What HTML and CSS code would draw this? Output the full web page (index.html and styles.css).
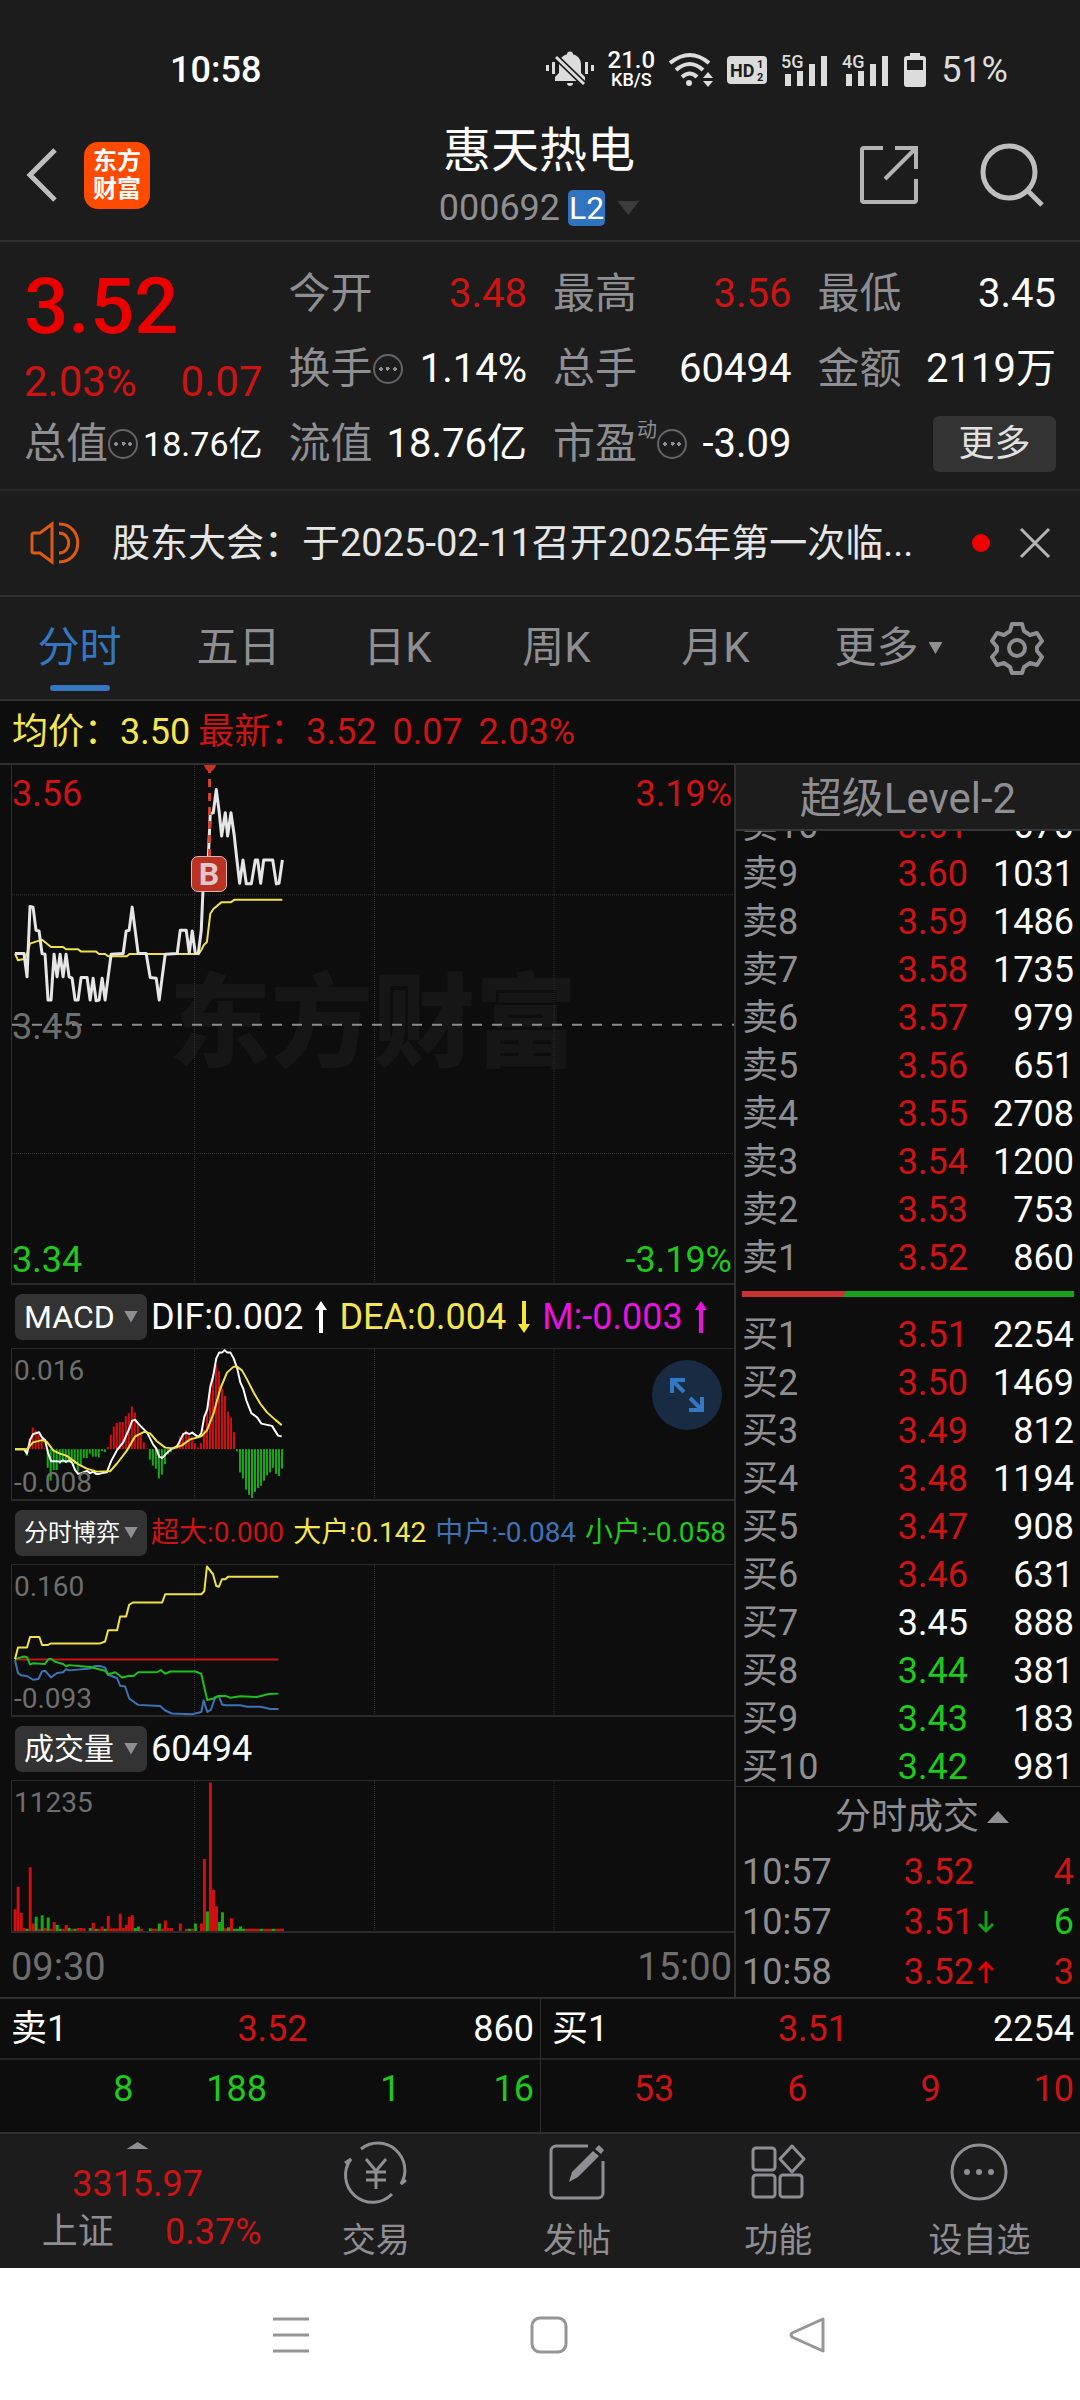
FILE: index.html
```html
<!DOCTYPE html>
<html lang="zh-CN">
<head>
    <meta charset="UTF-8">
    <meta name="viewport" content="width=device-width, initial-scale=1.0">
    <title>惠天热电 000692</title>
    <link rel="stylesheet" href="styles.css">
</head>
<body>
    <div class="status-bar">
        <span class="clock">10:58</span>
        <div class="status-icons">
            <svg width="48" height="36" viewBox="0 0 48 36" fill="#dcdcdc">
                <path d="M0 13h3v6H0zM6 10h3v12H6zM39 10h3v12h-3zM45 13h3v6h-3z"/>
                <path d="M9 29v-4l4-4v-9c0-5 4-9 8-9.500a3 3 0 0 1 6 0c4 .5 8 4.500 8 9.500v9l4 4v4zM21 31h6a3 3 0 0 1-6 0z"/>
                <path d="M8 3l30 29" stroke="#1c1c1c" stroke-width="6"/>
                <path d="M10 5l28 27" stroke="#dcdcdc" stroke-width="3"/>
            </svg>
            <div class="net-speed"><span>21.0</span><span>KB/S</span></div>
            <svg width="44" height="34" viewBox="0 0 44 34" fill="none" stroke="#dcdcdc" stroke-width="4">
                <path d="M1 10q20-16 39 0M7 17q14-12 27 0M13 24q8-7 15 0"/>
                <circle cx="20" cy="30" r="3" fill="#dcdcdc" stroke="none"/>
                <path d="M34 25l5-6 5 6zM34 28l5 6 5-6z" fill="#dcdcdc" stroke="none"/>
            </svg>
            <svg class="hd" width="40" height="28" viewBox="0 0 40 28">
                <rect width="40" height="28" rx="4" fill="#dcdcdc"/>
                <text x="3" y="21" font-size="18" font-weight="700">HD</text>
                <text x="30" y="12" font-size="11" font-weight="700">1</text>
                <text x="30" y="25" font-size="11" font-weight="700">2</text>
            </svg>
            <svg class="signal" width="47" height="34" viewBox="0 0 47 34" fill="#dcdcdc">
                <text x="0" y="15" font-size="18" font-weight="500">5G</text>
                <path d="M4 21h6v12H4zM16 18h6v15h-6zM28 11h6v22h-6zM40 3h6v30h-6z"/>
            </svg>
            <svg class="signal" width="47" height="34" viewBox="0 0 47 34" fill="#dcdcdc">
                <text x="0" y="15" font-size="18" font-weight="500">4G</text>
                <path d="M4 21h6v12H4zM16 18h6v15h-6zM28 11h6v22h-6zM40 3h6v30h-6z"/>
            </svg>
            <svg width="24" height="36" viewBox="0 0 24 36" fill="#dcdcdc">
                <path d="M7 1h10v3h3a3 3 0 0 1 3 3v25a3 3 0 0 1-3 3H4a3 3 0 0 1-3-3V7a3 3 0 0 1 3-3h3z"/>
                <path d="M4 8h16v10H4z" fill="#1c1c1c"/>
            </svg>
            <span class="battery">51%</span>
        </div>
    </div>

    <header class="top-bar">
        <div class="top-left">
            <button class="icon-btn" aria-label="返回">
                <svg width="30" height="54" viewBox="4 0 30 54" fill="none" stroke="#bebebe" stroke-width="5"><path d="M31 2L6 27l25 25"/></svg>
            </button>
            <a class="logo" href="#"><span>东方</span><span>财富</span></a>
        </div>
        <div class="stock">
            <h1>惠天热电</h1>
            <div class="code">000692<span class="level">L2</span><i class="caret dark"></i></div>
        </div>
        <div class="top-right">
            <button class="icon-btn" aria-label="分享">
                <svg width="58" height="58" viewBox="0 0 58 58" fill="none" stroke="#b4b4b4" stroke-width="4">
                    <path d="M23 2H4a2 2 0 0 0-2 2v50a2 2 0 0 0 2 2h50a2 2 0 0 0 2-2V33M35 2h21v21M56 2L25 33"/>
                </svg>
            </button>
            <button class="icon-btn" aria-label="搜索">
                <svg width="64" height="64" viewBox="0 0 64 64" fill="none" stroke="#bebebe" stroke-width="5"><circle cx="29" cy="29" r="26"/><path d="M48 48l14 14"/></svg>
            </button>
        </div>
    </header>

    <section class="quote">
        <div class="last">
            <div class="last-price">3.52</div>
            <div class="last-change"><span>2.03%</span><span>0.07</span></div>
        </div>
        <div class="cell"><span class="name">今开</span><span class="up">3.48</span></div>
        <div class="cell"><span class="name">最高</span><span class="up">3.56</span></div>
        <div class="cell"><span class="name">最低</span><span>3.45</span></div>
        <div class="cell"><span class="name">换手<i class="info"></i></span><span>1.14%</span></div>
        <div class="cell"><span class="name">总手</span><span>60494</span></div>
        <div class="cell"><span class="name">金额</span><span>2119万</span></div>
        <div class="cell"><span class="name">总值<i class="info"></i></span><span class="small">18.76亿</span></div>
        <div class="cell"><span class="name">流值</span><span>18.76亿</span></div>
        <div class="cell"><span class="name">市盈<sup>动</sup><i class="info"></i></span><span>-3.09</span></div>
        <div class="cell end"><button class="more-btn">更多</button></div>
    </section>

    <section class="notice">
        <svg width="50" height="44" viewBox="0 0 50 44" fill="none" stroke="#dc5a14" stroke-width="3">
            <path d="M22 3v38L10 32H4a2 2 0 0 1-2-2V14a2 2 0 0 1 2-2h6zM29 3c25 0 25 38 0 38M29 12c13 0 13 20 0 20"/>
        </svg>
        <a class="notice-text" href="#">股东大会：于2025-02-11召开2025年第一次临...</a>
        <i class="dot"></i>
        <button class="icon-btn" aria-label="关闭">
            <svg width="30" height="30" viewBox="0 0 30 30" stroke="#b4b4b4" stroke-width="3"><path d="M1 1l28 28M29 1L1 29"/></svg>
        </button>
    </section>

    <nav class="tabs">
        <button class="tab active">分时</button>
        <button class="tab">五日</button>
        <button class="tab">日K</button>
        <button class="tab">周K</button>
        <button class="tab">月K</button>
        <button class="tab tab-more">更多<i class="caret"></i></button>
        <button class="icon-btn gear" aria-label="设置">
            <svg width="52" height="52" viewBox="0 0 52 52" fill="none" stroke="#8e8e93" stroke-width="4" stroke-linejoin="round">
                <path d="M21 2h10l2 7 6 4 7-2 5 8-5 6v4l5 6-5 8-7-2-6 4-2 6H21l-2-6-6-4-7 2-5-8 5-6v-4l-5-6 5-8 7 2 6-4z"/>
                <circle cx="26" cy="26" r="8"/>
            </svg>
        </button>
    </nav>

    <div class="summary">
        <span class="yellow">均价：3.50</span>
        <span class="up">最新：3.52</span>
        <span class="up">0.07</span>
        <span class="up">2.03%</span>
    </div>

    <main class="board">
        <section class="charts">
            <div class="chart price-chart">
                <div class="watermark">东方财富</div>
                <svg viewBox="36 42 2163 1560" preserveAspectRatio="none">
                    <path class="grid" d="M583 42V1602M1122 42V1602M1660 42V1602M36 433H2199M36 1212H2199"/>
                    <path class="mid" d="M36 824H2199"/>
                    <polyline class="line yellow-line" points="45,610 54,630 72,626 81,610 90,580 126,568 153,590 189,590 198,597 234,597 243,604 288,604 297,611 315,611 324,618 380,618 388,611 595,611 603,600 610,585 620,575 630,490 640,475 664,455 692,455 702,448 846,448"/>
                    <polyline class="line price-line" points="45,610 72,610 81,680 90,468 99,470 108,540 117,542 126,610 135,612 144,750 153,750 162,612 171,680 180,612 189,680 198,612 207,680 216,684 225,750 234,750 243,682 261,682 270,750 279,684 288,752 297,750 306,684 315,750 324,680 333,612 369,610 378,542 387,540 396,470 405,540 414,610 438,610 450,682 468,684 477,750 486,680 495,612 531,610 540,540 558,540 567,608 576,542 585,608 594,610 603,540 612,330 621,395 630,188 639,186 648,116 657,186 664,256 675,186 682,256 692,186 702,256 710,330 718,398 728,328 738,400 753,400 765,328 772,328 781,398 790,328 817,328 828,400 836,398 846,328"/>
                    <path class="flag" d="M628 42V320"/>
                    <path d="M611 42h36q-4 16-18 22q-14-6-18-22z" fill="#c8321e"/>
                </svg>
                <span class="trade-mark">B</span>
                <span class="label top-l up">3.56</span>
                <span class="label top-r up">3.19%</span>
                <span class="label mid-l">3.45</span>
                <span class="label bottom-l down">3.34</span>
                <span class="label bottom-r down">-3.19%</span>
            </div>

            <div class="legend">
                <button class="picker"><span class="picker-en">MACD</span><i class="caret"></i></button>
                <div class="values">
                    <span>DIF:0.002</span>
                    <svg width="12" height="32" viewBox="0 0 12 32"><path d="M6 0l6 9H8v23H4V9H0z" fill="#fff"/></svg>
                    <span class="yellow">DEA:0.004</span>
                    <svg width="12" height="32" viewBox="0 0 12 32"><path d="M6 32l6-9H8V0H4v23H0z" fill="#f5e632"/></svg>
                    <span class="magenta">M:-0.003</span>
                    <svg width="12" height="32" viewBox="0 0 12 32"><path d="M6 0l6 9H8v23H4V9H0z" fill="#e614dc"/></svg>
                </div>
            </div>
            <div class="chart sub-chart">
                <svg viewBox="36 19 2163 400" preserveAspectRatio="none">
                    <path class="grid" d="M583 19V419M1122 19V419M1660 19V419"/>
                    <g id="macdBars"></g>
                    <polyline class="line white-line" points="45,286 72,286 81,298 90,262 99,246 117,241 126,255 135,262 144,296 153,318 171,318 180,320 189,316 198,320 207,316 216,322 225,342 234,352 243,350 261,344 270,350 279,346 288,352 297,352 306,350 320,348 333,318 351,288 369,268 387,232 396,210 405,208 414,218 441,242 459,274 468,284 477,306 486,310 498,298 513,286 531,278 549,246 558,242 567,246 576,242 594,254 603,244 612,200 621,180 630,120 639,90 648,44 657,28 666,28 673,22 680,28 690,28 700,44 711,72 720,108 729,125 738,156 753,190 771,202 783,218 815,224 833,250 844,252"/>
                    <polyline class="line yellow-line" points="45,286 81,286 99,268 126,262 140,266 160,290 180,298 200,304 234,326 260,338 290,346 330,345 350,325 380,290 405,252 432,240 450,244 470,265 495,282 520,284 545,276 570,260 603,252 620,236 640,190 660,125 680,82 700,66 710,66 725,76 740,100 760,135 780,165 800,188 825,208 844,222"/>
                </svg>
                <span class="label sub-top">0.016</span>
                <span class="label sub-bottom">-0.008</span>
                <button class="expand" aria-label="放大">
                    <svg width="34" height="34" viewBox="0 0 34 34" fill="none" stroke="#3278c3" stroke-width="4"><path d="M2 15V2h13M2 2l12 12M32 19v13H19M32 32L20 20"/></svg>
                </button>
            </div>

            <div class="legend">
                <button class="picker"><span class="picker-long">分时博弈</span><i class="caret"></i></button>
                <div class="values compact">
                    <span class="up">超大:0.000</span>
                    <span class="yellow">大户:0.142</span>
                    <span class="blue">中户:-0.084</span>
                    <span class="down">小户:-0.058</span>
                </div>
            </div>
            <div class="chart sub-chart">
                <svg viewBox="36 584 2163 400" preserveAspectRatio="none">
                    <path class="grid" d="M583 584V984M1122 584V984M1660 584V984"/>
                    <polyline class="line red-line" points="45,836 834,836"/>
                    <polyline class="line blue-line" points="45,838 54,872 63,878 81,880 99,890 115,888 126,868 135,866 153,884 171,872 189,870 198,862 207,865 270,860 285,853 300,853 315,858 324,876 351,886 360,906 375,908 387,940 414,957 480,960 495,972 515,980 575,982 603,976 610,945 621,976 632,970 645,936 656,934 665,956 675,958 720,958 740,962 780,962 810,968 834,968"/>
                    <polyline class="line green-line" points="45,835 72,828 81,830 90,849 100,846 135,848 144,836 153,834 165,842 189,848 198,854 207,851 270,856 315,866 324,876 345,870 366,884 385,880 400,880 414,870 470,870 482,864 495,874 510,868 585,868 603,874 612,910 621,944 640,940 655,933 675,933 690,938 720,934 770,936 805,928 834,927"/>
                    <polyline class="line yellow-line" points="45,835 54,804 81,804 90,776 118,776 126,797 144,797 153,793 300,793 315,788 324,758 351,758 360,721 378,721 387,690 398,684 486,684 495,662 603,662 612,654 620,588 638,608 648,640 656,642 665,622 675,622 684,615 834,615"/>
                </svg>
                <span class="label sub-top">0.160</span>
                <span class="label sub-bottom">-0.093</span>
            </div>

            <div class="legend">
                <button class="picker"><span class="picker-cn">成交量</span><i class="caret"></i></button>
                <div class="values"><span>60494</span></div>
            </div>
            <div class="chart sub-chart">
                <svg viewBox="36 1148 2163 400" preserveAspectRatio="none">
                    <path class="grid" d="M583 1148V1548M1122 1148V1548M1660 1148V1548"/>
                    <g id="volumeBars"></g>
                </svg>
                <span class="label sub-top">11235</span>
            </div>
            <div class="times"><span>09:30</span><span>15:00</span></div>
        </section>

        <aside class="side">
            <h2>超级Level-2</h2>
            <div class="book">
                <table class="sells">
                    <tr><th>卖10</th><td class="up">3.61</td><td>670</td></tr>
                    <tr><th>卖9</th><td class="up">3.60</td><td>1031</td></tr>
                    <tr><th>卖8</th><td class="up">3.59</td><td>1486</td></tr>
                    <tr><th>卖7</th><td class="up">3.58</td><td>1735</td></tr>
                    <tr><th>卖6</th><td class="up">3.57</td><td>979</td></tr>
                    <tr><th>卖5</th><td class="up">3.56</td><td>651</td></tr>
                    <tr><th>卖4</th><td class="up">3.55</td><td>2708</td></tr>
                    <tr><th>卖3</th><td class="up">3.54</td><td>1200</td></tr>
                    <tr><th>卖2</th><td class="up">3.53</td><td>753</td></tr>
                    <tr><th>卖1</th><td class="up">3.52</td><td>860</td></tr>
                </table>
                <div class="ratio"></div>
                <table>
                    <tr><th>买1</th><td class="up">3.51</td><td>2254</td></tr>
                    <tr><th>买2</th><td class="up">3.50</td><td>1469</td></tr>
                    <tr><th>买3</th><td class="up">3.49</td><td>812</td></tr>
                    <tr><th>买4</th><td class="up">3.48</td><td>1194</td></tr>
                    <tr><th>买5</th><td class="up">3.47</td><td>908</td></tr>
                    <tr><th>买6</th><td class="up">3.46</td><td>631</td></tr>
                    <tr><th>买7</th><td>3.45</td><td>888</td></tr>
                    <tr><th>买8</th><td class="down">3.44</td><td>381</td></tr>
                    <tr><th>买9</th><td class="down">3.43</td><td>183</td></tr>
                    <tr><th>买10</th><td class="down">3.42</td><td>981</td></tr>
                </table>
            </div>
            <button class="ticks-title">分时成交<i class="caret-up"></i></button>
            <table class="ticks">
                <tr><th>10:57</th><td class="up">3.52</td><td class="arrow"></td><td class="up">4</td></tr>
                <tr><th>10:57</th><td class="up">3.51</td>
                    <td class="arrow"><svg width="16" height="22" viewBox="0 0 16 22" fill="none" stroke="#14a014" stroke-width="3"><path d="M8 0v20M1 13l7 7 7-7"/></svg></td>
                    <td class="down">6</td></tr>
                <tr><th>10:58</th><td class="up">3.52</td>
                    <td class="arrow"><svg width="16" height="22" viewBox="0 0 16 22" fill="none" stroke="#e60000" stroke-width="3"><path d="M8 22V2M1 9l7-7 7 7"/></svg></td>
                    <td class="up">3</td></tr>
            </table>
        </aside>
    </main>

    <section class="queue">
        <div class="queue-half">
            <div class="queue-head"><span>卖1</span><span class="up">3.52</span><span>860</span></div>
            <div class="queue-list down"><span>8</span><span>188</span><span>1</span><span>16</span></div>
        </div>
        <div class="queue-half">
            <div class="queue-head"><span>买1</span><span class="up">3.51</span><span>2254</span></div>
            <div class="queue-list up"><span>53</span><span>6</span><span>9</span><span>10</span></div>
        </div>
    </section>

    <footer class="bottom-bar">
        <a class="index up" href="#">
            <i class="caret-up small-caret"></i>
            <span>3315.97</span>
            <span class="index-row"><span class="grey">上证</span><span>0.37%</span></span>
        </a>
        <a class="action" href="#">
            <svg width="66" height="60" viewBox="0 0 66 60" fill="none" stroke="#8e8e93" stroke-width="3">
                <path d="M18 7a27 27 0 0 1 40 35l5-4M49 52a27 27 0 0 1-41-35l-6 4M23 17l10 12 10-12M33 29v18M23 30h20M23 38h20"/>
            </svg>
            <span>交易</span>
        </a>
        <a class="action" href="#">
            <svg width="60" height="60" viewBox="0 0 60 60" fill="none" stroke="#8e8e93" stroke-width="3">
                <path d="M41 4H9a5 5 0 0 0-5 5v42a5 5 0 0 0 5 5h42a5 5 0 0 0 5-5V19"/>
                <path d="M22 40l3-10 21-21 6 5-21 21zM48 7l4-4 5 5-3 4z" fill="#8e8e93" stroke="none"/>
            </svg>
            <span>发帖</span>
        </a>
        <a class="action" href="#">
            <svg width="60" height="60" viewBox="0 0 60 60" fill="none" stroke="#8e8e93" stroke-width="3">
                <rect x="5" y="6" width="22" height="22" rx="3"/>
                <rect x="5" y="33" width="22" height="22" rx="3"/>
                <rect x="32" y="33" width="22" height="22" rx="3"/>
                <path d="M44 4l12 13-12 13-12-13z" stroke-linejoin="round"/>
            </svg>
            <span>功能</span>
        </a>
        <a class="action" href="#">
            <svg width="60" height="60" viewBox="0 0 60 60" fill="none" stroke="#8e8e93" stroke-width="3">
                <circle cx="30" cy="30" r="27"/>
                <g fill="#8e8e93" stroke="none"><circle cx="18" cy="30" r="3"/><circle cx="30" cy="30" r="3"/><circle cx="42" cy="30" r="3"/></g>
            </svg>
            <span>设自选</span>
        </a>
    </footer>

    <div class="system-nav">
        <button class="icon-btn" aria-label="菜单"><svg width="38" height="38" viewBox="0 0 38 38" stroke="#969696" stroke-width="3"><path d="M1 3h36M1 19h36M1 35h36"/></svg></button>
        <button class="icon-btn" aria-label="主页"><svg width="38" height="38" viewBox="0 0 38 38" fill="none" stroke="#969696" stroke-width="3"><rect x="2" y="2" width="34" height="34" rx="8"/></svg></button>
        <button class="icon-btn" aria-label="后退"><svg width="38" height="38" viewBox="0 0 38 38" fill="none" stroke="#969696" stroke-width="3" stroke-linejoin="round"><path d="M35 3v32L4 21q-2-2 0-4z"/></svg></button>
    </div>

    <script src="script.js"></script>
</body>
</html>
```

FILE: styles.css
```css
* {
    box-sizing: border-box;
}

body {
    margin: 0;
    background-color: #1c1c1c;
    color: #fff;
    font-family: Roboto, "Noto Sans CJK SC", sans-serif;
    font-size: 36px;
    line-height: 48px;
}

button {
    background: none;
    border: none;
    padding: 0;
    margin: 0;
    color: inherit;
    font: inherit;
    cursor: pointer;
}

a {
    color: inherit;
    text-decoration: none;
}

svg {
    display: block;
    flex: none;
    overflow: visible;
}

.up { color: #cd1414; }
.down { color: #1ec81e; }
.yellow { color: #f5e650; }
.magenta { color: #e614dc; }
.blue { color: #3c73b4; }
.grey { color: #8e8e93; }

.caret,
.caret-up {
    display: block;
    width: 14px;
    height: 12px;
    background-color: #8e8e93;
    clip-path: polygon(0 0, 100% 0, 50% 100%);
}

.caret.dark {
    width: 22px;
    height: 14px;
    margin-left: 12px;
    background-color: #3c3c3c;
}

.caret-up {
    width: 22px;
    clip-path: polygon(50% 0, 100% 100%, 0 100%);
}

/* Status bar */
.status-bar {
    display: flex;
    align-items: center;
    justify-content: space-between;
    padding: 40px 72px 10px 170px;
    height: 110px;
}

.clock {
    font-weight: 500;
}

.status-icons {
    display: flex;
    align-items: center;
    gap: 14px;
}

.net-speed {
    display: flex;
    flex-direction: column;
    align-items: center;
    font-size: 24px;
    font-weight: 500;
    line-height: 20px;
}

.net-speed span + span {
    font-size: 18px;
}

.hd text {
    fill: #1c1c1c;
}

.battery {
    color: #dcdcdc;
    font-size: 36px;
}

/* Header */
.top-bar {
    display: grid;
    grid-template-columns: 1fr auto 1fr;
    align-items: center;
    padding: 8px 36px 8px 28px;
    border-bottom: 2px solid #303030;
}

.top-left,
.top-right {
    display: flex;
    align-items: center;
    gap: 26px;
}

.top-right {
    justify-content: flex-end;
    gap: 62px;
}

.logo {
    display: flex;
    flex-direction: column;
    align-items: center;
    justify-content: center;
    width: 66px;
    height: 67px;
    border-radius: 14px;
    background-color: #ff4b00;
    font-size: 24px;
    font-weight: 700;
    line-height: 28px;
}

.stock {
    padding-left: 6px;
    text-align: center;
}

h1 {
    margin: 0;
    font-size: 48px;
    font-weight: 400;
    line-height: 66px;
}

.code {
    display: flex;
    align-items: center;
    justify-content: center;
    color: #8e8e93;
}

.level {
    margin-left: 8px;
    padding: 0 1px;
    border-radius: 5px;
    background-color: #3073c1;
    color: #fff;
    font-size: 32px;
    line-height: 36px;
}

/* Quote */
.quote {
    display: grid;
    grid-template-columns: repeat(4, 1fr);
    grid-auto-rows: 75px;
    column-gap: 26px;
    padding: 14px 24px 8px;
    border-bottom: 2px solid #282828;
}

.last {
    grid-row: span 2;
}

.last-price {
    color: #eb0000;
    font-size: 78px;
    font-weight: 500;
    line-height: 102px;
}

.last-change,
.cell {
    display: flex;
    align-items: center;
    justify-content: space-between;
    font-size: 40px;
    white-space: nowrap;
}

.last-change {
    color: #cd1414;
    font-size: 42px;
}

.name {
    display: flex;
    align-items: center;
    color: #8e8e93;
    font-size: 42px;
}

.name sup {
    align-self: flex-start;
    font-size: 20px;
    line-height: 20px;
}

.cell .small {
    font-size: 34px;
}

.cell.end {
    justify-content: flex-end;
}

.info {
    width: 30px;
    height: 30px;
    border: 2px solid #646468;
    border-radius: 50%;
    background: radial-gradient(circle, #8e8e93 2px, transparent 2px) center / 7px 7px no-repeat,
                radial-gradient(circle at 6px 13px, #8e8e93 2px, transparent 2px),
                radial-gradient(circle at 20px 13px, #8e8e93 2px, transparent 2px);
}

.more-btn {
    width: 123px;
    height: 56px;
    border-radius: 6px;
    background-color: #333;
    color: #e1e1e1;
    font-size: 36px;
}

/* Notice */
.notice {
    display: flex;
    align-items: center;
    height: 106px;
    padding: 0 30px;
    border-bottom: 2px solid #303030;
    color: #e6e6e6;
    font-size: 38px;
}

.notice-text {
    flex: 1;
    padding-left: 32px;
    white-space: nowrap;
}

.dot {
    width: 18px;
    height: 18px;
    margin-right: 30px;
    border-radius: 50%;
    background-color: #f00000;
}

/* Tabs */
.tabs {
    display: grid;
    grid-template-columns: repeat(6, 159fr) 126fr;
    height: 104px;
    border-bottom: 2px solid #303030;
    color: #8e8e93;
    font-size: 42px;
}

.tab {
    display: flex;
    align-items: center;
    justify-content: center;
    position: relative;
}

.tab.active {
    color: #3377c0;
}

.tab.active::after {
    content: '';
    position: absolute;
    bottom: 8px;
    width: 60px;
    height: 6px;
    border-radius: 3px;
    background-color: #3377c0;
}

.tab-more {
    gap: 10px;
    padding-left: 28px;
}

.gear {
    display: flex;
    align-items: center;
    justify-content: center;
}

.summary {
    display: flex;
    align-items: center;
    gap: 16px;
    height: 64px;
    padding: 0 12px;
    border-bottom: 2px solid #303030;
    background-color: #0d0d0d;
}

.summary .yellow {
    margin-right: -8px;
}

/* Charts */
.board {
    display: grid;
    grid-template-columns: minmax(0, 734fr) minmax(0, 346fr);
    background-color: #0d0d0d;
}

.charts {
    padding-left: 11px;
}

.chart {
    position: relative;
    border-left: 1px solid #303030;
    border-bottom: 2px solid #2a2a2a;
}

.chart > svg {
    position: relative;
    width: 100%;
    height: 100%;
}

.price-chart {
    height: 520px;
}

.sub-chart {
    height: 153px;
    border-top: 1px solid #2a2a2a;
}

.grid,
.mid,
.line,
.flag {
    fill: none;
    vector-effect: non-scaling-stroke;
}

.grid {
    stroke: #333;
    stroke-dasharray: 1 1;
}

.mid {
    stroke: #8c8c8c;
    stroke-width: 2px;
    stroke-dasharray: 10 10;
}

.line {
    stroke-width: 2px;
    stroke-linejoin: round;
}

.price-line {
    stroke: #e6e6e6;
    stroke-width: 3px;
}

.white-line { stroke: #fff; }
.yellow-line { stroke: #f0e146; }
.red-line { stroke: #c81414; }
.green-line { stroke: #1ebe1e; }
.blue-line { stroke: #3c73b4; }

.flag {
    stroke: #d24632;
    stroke-width: 3px;
    stroke-dasharray: 8 6;
}

.watermark {
    position: absolute;
    inset: 0;
    display: flex;
    align-items: center;
    justify-content: center;
    color: #161616;
    font-size: 102px;
    font-weight: 900;
}

.trade-mark {
    position: absolute;
    left: 179px;
    top: 91px;
    width: 36px;
    height: 36px;
    border: 1px solid #dcb4aa;
    border-radius: 7px;
    background-color: #b93223;
    color: #e1c8c8;
    font-size: 32px;
    font-weight: 700;
    line-height: 34px;
    text-align: center;
}

.label {
    position: absolute;
    line-height: 40px;
}

.top-l { top: 9px; left: 0; }
.top-r { top: 9px; right: 2px; }
.mid-l { top: 242px; left: 0; color: #6e6e6e; }
.bottom-l { bottom: 3px; left: 0; }
.bottom-r { bottom: 3px; right: 2px; }

.sub-top,
.sub-bottom {
    left: 2px;
    color: #6e6e6e;
    font-size: 28px;
}

.sub-top { top: 2px; }
.sub-bottom { bottom: -4px; }

.expand {
    display: flex;
    align-items: center;
    justify-content: center;
    position: absolute;
    top: 11px;
    right: 12px;
    width: 70px;
    height: 70px;
    border-radius: 50%;
    background-color: #182b42;
}

.legend {
    display: flex;
    align-items: center;
    gap: 4px;
    height: 63px;
    padding-left: 4px;
}

.picker {
    display: flex;
    align-items: center;
    justify-content: space-between;
    flex: none;
    width: 132px;
    height: 46px;
    padding: 0 9px;
    border-radius: 7px;
    background-color: #333;
    font-size: 32px;
}

.picker-long {
    font-size: 24px;
}

.picker-cn {
    font-size: 30px;
}

.values {
    display: flex;
    align-items: center;
    gap: 12px;
    white-space: nowrap;
}

.values.compact {
    gap: 9px;
    font-size: 28px;
}

.times {
    display: flex;
    justify-content: space-between;
    height: 64px;
    padding: 10px 2px 0 0;
    color: #6e6e6e;
    font-size: 38px;
}

/* Order book */
.side {
    border-left: 2px solid #303030;
}

h2 {
    margin: 0;
    height: 66px;
    border-bottom: 2px solid #363636;
    background-color: #1c1c1c;
    color: #8e8e93;
    font-size: 42px;
    font-weight: 400;
    line-height: 68px;
    text-align: center;
}

.book {
    height: 956px;
    overflow: hidden;
    border-bottom: 1px solid #303030;
}

table {
    width: 100%;
    border-collapse: collapse;
    table-layout: fixed;
}

th,
td {
    height: 48px;
    padding: 0 6px;
    line-height: 48px;
    text-align: right;
    white-space: nowrap;
}

th {
    color: #8e8e93;
    font-weight: 400;
    text-align: left;
}

.book td {
    width: 106px;
}

.sells {
    margin-top: -29px;
}

.ratio {
    height: 6px;
    margin: 9px 6px 14px;
    background: linear-gradient(120deg, #c83232 31%, #1aa01a 31%);
}

.ticks-title {
    display: flex;
    align-items: center;
    justify-content: center;
    gap: 8px;
    width: 100%;
    height: 60px;
    padding-left: 28px;
    color: #8e8e93;
}

.ticks th,
.ticks td {
    height: 50px;
}

.ticks td {
    width: 84px;
    padding-left: 0;
}

.ticks td:nth-child(2) {
    padding-right: 2px;
}

.ticks td.arrow {
    width: 20px;
    padding: 0 2px;
}

/* Queue */
.queue {
    display: grid;
    grid-template-columns: 1fr 1fr;
    border-top: 2px solid #303030;
    border-bottom: 2px solid #303030;
    background-color: #0d0d0d;
}

.queue-half + .queue-half {
    border-left: 1px solid #303030;
}

.queue-head {
    display: grid;
    grid-template-columns: 1fr 1fr 1fr;
    padding: 6px 6px 5px 11px;
    border-bottom: 2px solid #262626;
}

.queue-head span {
    text-align: center;
}

.queue-head span:first-child {
    text-align: left;
}

.queue-head span:last-child {
    text-align: right;
}

.queue-list {
    display: grid;
    grid-template-columns: repeat(4, 1fr);
    padding: 5px 6px 19px 0;
    text-align: right;
}

/* Bottom bar */
.bottom-bar {
    display: grid;
    grid-template-columns: 275fr repeat(4, 201fr);
    height: 134px;
    color: #8e8e93;
}

.index,
.action {
    display: flex;
    flex-direction: column;
    align-items: center;
}

.index {
    padding-top: 8px;
}

.small-caret {
    height: 7px;
    margin-bottom: 11px;
}

.index-row {
    display: flex;
    justify-content: space-between;
    width: 220px;
    margin-left: 28px;
}

.action {
    padding-top: 8px;
    gap: 14px;
    font-size: 34px;
}

.system-nav {
    display: flex;
    align-items: center;
    justify-content: center;
    gap: 220px;
    height: 133px;
    padding-left: 18px;
    background-color: #fff;
}
```

FILE: script.js
```js
// One value per minute from 09:30, negative values are drawn green
const macd = [
    0, 0, 0, 0, -18, 30, 58, 50, 45, 28, 2, -50, -84, -56, -56, -40, -36, -36, -36, -36,
    -40, -60, -46, -24, -24, -12, -20, -20, -22, -5, -8, 6, 38, 60, 70, 72, 72, 88, 96, 114,
    98, 68, 38, 18, 2, -28, -44, -52, -78, -68, -40, -14, -8, 2, 12, 34, 44, 50, 36, 34,
    16, 4, 16, 52, 110, 160, 200, 225, 208, 162, 142, 100, 84, 45, -6, -62, -78, -108, -122, -130,
    -114, -104, -98, -84, -70, -62, -50, -66, -72, -52
];

const volume = [
    58, 118, 48, 8, -6, 170, 20, -38, 6, -42, 8, -36, 6, 24, -16, -6, 6, 16, -8, 6,
    -6, 8, 8, 7, 0, -8, 22, -6, 6, 12, -6, 40, 7, 7, 7, 46, 8, 16, 38, 42,
    -8, -12, 6, 0, 0, -7, 6, 6, -20, 6, 28, 8, 8, 0, 0, 20, 0, 6, -6, 6,
    -20, 0, 20, 192, -52, 396, 110, 66, -24, -50, 7, -10, 34, -6, -6, -12, -6, 6, 6, 6,
    6, 6, -6, 6, 6, 6, -6, 6, 6, 6
];

function drawBars(id, values, base, width, signed) {
    const group = document.getElementById(id);
    values.forEach((value, i) => {
        const height = Math.abs(value);
        const bar = document.createElementNS('http://www.w3.org/2000/svg', 'rect');
        bar.setAttribute('x', 41 + i * 9);
        bar.setAttribute('y', signed && value < 0 ? base : base - height);
        bar.setAttribute('width', width);
        bar.setAttribute('height', height);
        bar.setAttribute('fill', value < 0 ? '#14aa14' : '#d20f0f');
        group.appendChild(bar);
    });
}

drawBars('macdBars', macd, 286, 6, true);
drawBars('volumeBars', volume, 1548, 9, false);
```
